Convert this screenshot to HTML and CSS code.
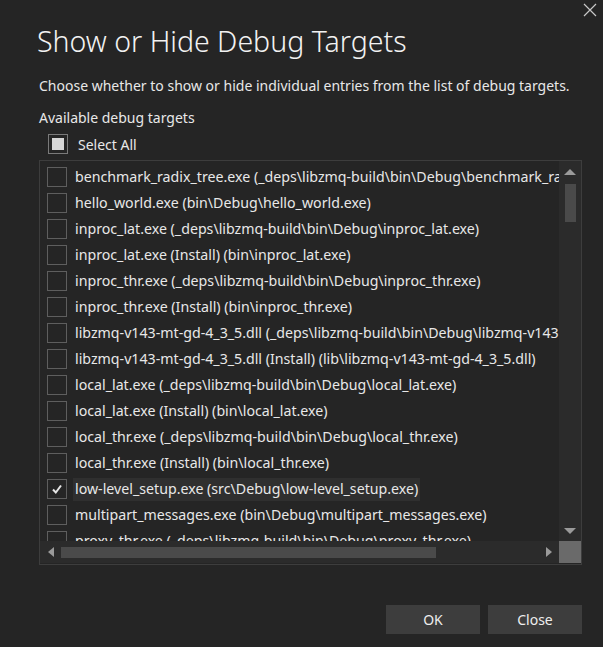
FILE: index.html
```html
<!DOCTYPE html>
<html>
<head>
<meta charset="utf-8">
<link rel="stylesheet" href="styles.css">
</head>
<body>
<div class="dialog">
  <button class="close-x" aria-label="Close">
    <svg width="14" height="14" viewBox="0 0 14 14"><path d="M1 1 L13 13 M13 1 L1 13" stroke="#c8c8c8" stroke-width="1.2" fill="none"/></svg>
  </button>
  <h1 class="title">Show or Hide Debug Targets</h1>
  <p class="desc">Choose whether to show or hide individual entries from the list of debug targets.</p>
  <div class="label">Available debug targets</div>
  <div class="select-all"><span class="box partial"><span class="fill"></span></span><span>Select All</span></div>
  <div class="listbox">
    <div class="viewport">
      <div class="row"><span class="box"></span><span class="txt">benchmark_radix_tree.exe (_deps\libzmq-build\bin\Debug\benchmark_radix_tree.exe)</span></div>
      <div class="row"><span class="box"></span><span class="txt">hello_world.exe (bin\Debug\hello_world.exe)</span></div>
      <div class="row"><span class="box"></span><span class="txt">inproc_lat.exe (_deps\libzmq-build\bin\Debug\inproc_lat.exe)</span></div>
      <div class="row"><span class="box"></span><span class="txt">inproc_lat.exe (Install) (bin\inproc_lat.exe)</span></div>
      <div class="row"><span class="box"></span><span class="txt">inproc_thr.exe (_deps\libzmq-build\bin\Debug\inproc_thr.exe)</span></div>
      <div class="row"><span class="box"></span><span class="txt">inproc_thr.exe (Install) (bin\inproc_thr.exe)</span></div>
      <div class="row"><span class="box"></span><span class="txt">libzmq-v143-mt-gd-4_3_5.dll (_deps\libzmq-build\bin\Debug\libzmq-v143-mt-gd-4_3_5.dll)</span></div>
      <div class="row"><span class="box"></span><span class="txt">libzmq-v143-mt-gd-4_3_5.dll (Install) (lib\libzmq-v143-mt-gd-4_3_5.dll)</span></div>
      <div class="row"><span class="box"></span><span class="txt">local_lat.exe (_deps\libzmq-build\bin\Debug\local_lat.exe)</span></div>
      <div class="row"><span class="box"></span><span class="txt">local_lat.exe (Install) (bin\local_lat.exe)</span></div>
      <div class="row"><span class="box"></span><span class="txt">local_thr.exe (_deps\libzmq-build\bin\Debug\local_thr.exe)</span></div>
      <div class="row"><span class="box"></span><span class="txt">local_thr.exe (Install) (bin\local_thr.exe)</span></div>
      <div class="row"><span class="box checked"><svg width="14" height="14" viewBox="0 0 14 14"><path d="M3 7.5 L5.8 10.5 L11 3.5" stroke="#e6e6e6" stroke-width="2" fill="none"/></svg></span><span class="txt sel">low-level_setup.exe (src\Debug\low-level_setup.exe)</span></div>
      <div class="row"><span class="box"></span><span class="txt">multipart_messages.exe (bin\Debug\multipart_messages.exe)</span></div>
      <div class="row"><span class="box"></span><span class="txt">proxy_thr.exe (_deps\libzmq-build\bin\Debug\proxy_thr.exe)</span></div>
    </div>
    <div class="vscroll">
      <span class="arrow up"></span>
      <div class="vtrack"><span class="vthumb"></span></div>
      <span class="arrow down"></span>
    </div>
    <div class="hscroll">
      <span class="arrow left"></span>
      <div class="htrack"><span class="hthumb"></span></div>
      <span class="arrow right"></span>
    </div>
    <div class="corner"></div>
  </div>
  <div class="buttons">
    <button class="btn">OK</button>
    <button class="btn">Close</button>
  </div>
</div>
</body>
</html>
```
FILE: styles.css
```css
html, body {
  margin: 0;
  padding: 0;
  background: #252525;
}
body {
  width: 603px;
  height: 647px;
  overflow: hidden;
  font-family: "Noto Sans", "Open Sans", sans-serif;
  color: #e8e8e8;
}
.dialog {
  position: relative;
  height: 647px;
  box-sizing: border-box;
  padding: 21px 21px 13px 39px;
  display: flex;
  flex-direction: column;
}
.close-x {
  position: absolute;
  top: 2px;
  right: 5px;
  width: 16px;
  height: 16px;
  padding: 0;
  border: 0;
  background: transparent;
  display: flex;
  align-items: center;
  justify-content: center;
}
.title {
  margin: 0 0 0 -2px;
  font-weight: 300;
  font-size: 28.5px;
  line-height: 40px;
  color: #f2f2f2;
}
.desc {
  margin: 15px 0 0 0;
  font-size: 14px;
  line-height: 20px;
}
.label {
  margin-top: 12px;
  font-size: 14px;
  line-height: 20px;
}
.select-all {
  display: flex;
  align-items: center;
  gap: 10px;
  margin: 6px 0 0 9px;
  font-size: 14px;
  height: 20px;
}
.box {
  width: 20px;
  height: 20px;
  box-sizing: border-box;
  border: 1px solid #5e5e5e;
  display: flex;
  align-items: center;
  justify-content: center;
  flex: none;
}
.select-all .box {
  border-color: #7a7a7a;
}
.fill {
  width: 12px;
  height: 12px;
  background: #d6d6d6;
}
.listbox {
  margin-top: 6px;
  width: 543px;
  height: 405px;
  box-sizing: border-box;
  border: 1px solid #3d3d3d;
  display: grid;
  grid-template-columns: 519px 22px;
  grid-template-rows: 380px 22px;
}
.viewport {
  overflow: hidden;
  padding-top: 3px;
}
.row {
  height: 26px;
  display: flex;
  align-items: center;
  padding-left: 7px;
  gap: 6px;
  white-space: nowrap;
  font-size: 14.2px;
}
.txt {
  padding: 2px 2px 3px;
  line-height: 18px;
}
.txt.sel {
  background: #2f2f2f;
}
.vscroll {
  background: #2b2b2b;
  display: flex;
  flex-direction: column;
  align-items: center;
}
.vtrack {
  flex: 1;
  width: 11px;
  position: relative;
}
.vthumb {
  position: absolute;
  left: 0;
  top: 4px;
  width: 11px;
  height: 38px;
  background: #4a4a4a;
}
.hscroll {
  background: #2b2b2b;
  display: flex;
  align-items: center;
}
.htrack {
  flex: 1;
  height: 11px;
  position: relative;
}
.hthumb {
  position: absolute;
  top: 0;
  left: 0;
  width: 375px;
  height: 11px;
  background: #4a4a4a;
}
.corner {
  background: #6a6a6a;
}
.arrow {
  width: 0;
  height: 0;
  flex: none;
}
.arrow.up {
  margin-top: 8px;
  margin-bottom: 5px;
  border-left: 6px solid transparent;
  border-right: 6px solid transparent;
  border-bottom: 6px solid #9a9a9a;
}
.arrow.down {
  margin-bottom: 7px;
  margin-top: 5px;
  border-left: 6px solid transparent;
  border-right: 6px solid transparent;
  border-top: 6px solid #9a9a9a;
}
.arrow.left {
  margin-left: 8px;
  margin-right: 7px;
  border-top: 5px solid transparent;
  border-bottom: 5px solid transparent;
  border-right: 6px solid #9a9a9a;
}
.arrow.right {
  margin-left: 7px;
  margin-right: 7px;
  border-top: 5px solid transparent;
  border-bottom: 5px solid transparent;
  border-left: 6px solid #9a9a9a;
}
.buttons {
  margin-top: auto;
  display: flex;
  justify-content: flex-end;
  gap: 8px;
}
.btn {
  width: 94px;
  height: 29px;
  border: 0;
  background: #3d3d3d;
  color: #ededed;
  font-family: "Noto Sans", "Open Sans", sans-serif;
  font-size: 14px;
  padding: 0;
}
```
